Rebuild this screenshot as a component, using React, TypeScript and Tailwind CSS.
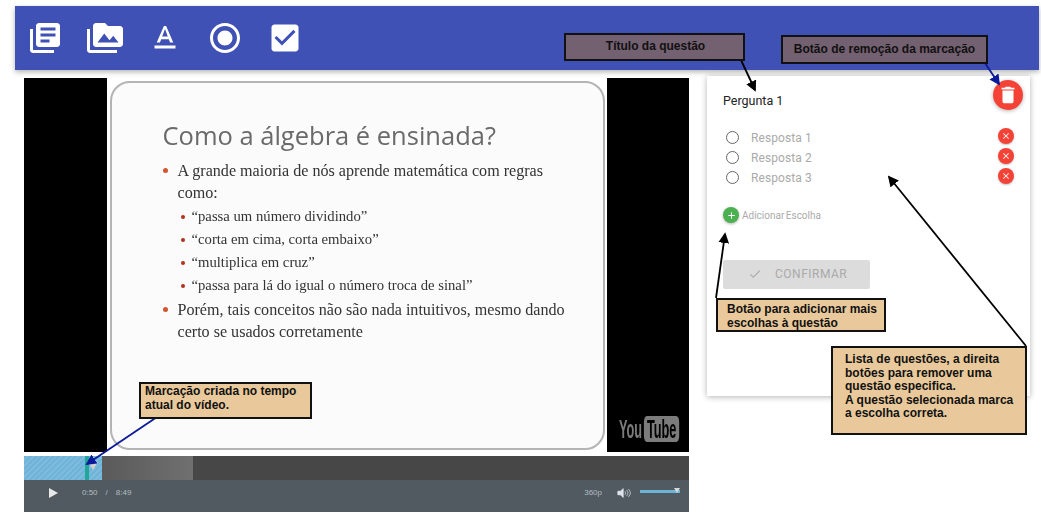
const toolbarIcons = [
  "M4 6H2v14c0 1.1.9 2 2 2h14v-2H4V6zm16-4H8c-1.1 0-2 .9-2 2v12c0 1.1.9 2 2 2h12c1.1 0 2-.9 2-2V4c0-1.1-.9-2-2-2zm-1 9H9V9h10v2zm-4 4H9v-2h6v2zm4-8H9V5h10v2z",
  "M2 6H0v5h.01L0 20c0 1.1.9 2 2 2h18v-2H2V6zm20-2h-8l-2-2H6c-1.1 0-1.99.9-1.99 2L4 16c0 1.1.9 2 2 2h16c1.1 0 2-.9 2-2V6c0-1.1-.9-2-2-2zM7 15l4.5-6 3.5 4.51 2.5-3.01L21 15H7z",
  "M5 17v2h14v-2H5zm4.5-4.2h5l.9 2.2h2.1L12.75 4h-1.5L6.5 15h2.1l.9-2.2zM12 5.98L13.87 11h-3.74L12 5.98z",
  "M12 7c-2.76 0-5 2.24-5 5s2.24 5 5 5 5-2.24 5-5-2.24-5-5-5zm0-5C6.48 2 2 6.48 2 12s4.48 10 10 10 10-4.48 10-10S17.52 2 12 2zm0 18c-4.42 0-8-3.58-8-8s3.58-8 8-8 8 3.58 8 8-3.58 8-8 8z",
  "M19 3H5c-1.11 0-2 .9-2 2v14c0 1.1.89 2 2 2h14c1.11 0 2-.9 2-2V5c0-1.1-.89-2-2-2zm-9 14l-5-5 1.41-1.41L10 14.17l7.59-7.59L19 8l-9 9z",
];

const subItems = [
  "“passa um número dividindo”",
  "“corta em cima, corta embaixo”",
  "“multiplica em cruz”",
  "“passa para lá do igual o número troca de sinal”",
];

function Toolbar() {
  return (
    <div className="ml-[15px] mt-[6px] flex h-[64px] w-[1024px] items-start gap-[24px] bg-[#3f51b5] pl-[12px] pt-[14px] shadow-[0_2px_5px_rgba(0,0,0,0.3)]">
      {toolbarIcons.map((d) => (
        <svg key={d} viewBox="0 0 24 24" className="h-[36px] w-[36px] fill-white">
          <path d={d} />
        </svg>
      ))}
    </div>
  );
}

function Slide() {
  return (
    <div className="flex h-[374px] w-[665px] justify-center bg-black">
      <div className="h-full w-[500px] bg-white pl-[3px] pt-[3px]">
        <div className="h-[369px] w-[495px] rounded-[20px] border-2 border-[#b4b4b4] bg-[#fbfbfb] pl-[51px] pr-[29px] pt-[34px] font-['Liberation_Serif',serif] text-[16.100px] text-[#333] blur-[0.4px]">
          <h1 className="font-['Open_Sans',sans-serif] text-[25.500px] leading-[36px] text-[#6a6a6a]">
            Como a álgebra é ensinada?
          </h1>
          <div className="mt-[7px] flex gap-[10px]">
            <span className="mt-[8px] h-[5px] w-[5px] shrink-0 rounded-full bg-[#d0562c]" />
            <p className="leading-[22px]">A grande maioria de nós aprende matemática com regras como:</p>
          </div>
          <ul className="ml-[18px] mt-px">
            {subItems.map((item) => (
              <li key={item} className="flex h-[23px] items-center gap-[7px] text-[14.700px]">
                <span className="h-[4px] w-[4px] shrink-0 rounded-full bg-[#b03020]" />
                {item}
              </li>
            ))}
          </ul>
          <div className="mt-[2px] flex gap-[10px]">
            <span className="mt-[8px] h-[5px] w-[5px] shrink-0 rounded-full bg-[#d0562c]" />
            <p className="leading-[21.500px]">Porém, tais conceitos não são nada intuitivos, mesmo dando certo se usados corretamente</p>
          </div>
        </div>
      </div>
    </div>
  );
}

function Player() {
  return (
    <div className="w-[665px]">
      <div className="mt-[4px] flex h-[24px] bg-[#474747]">
        <div className="relative h-full w-[78px] bg-[repeating-linear-gradient(135deg,#6fb3d8_0,#6fb3d8_2px,#7dbcdc_2px,#7dbcdc_4px)]">
          <div className="absolute left-[61px] top-0 h-full w-[4px] bg-[#1fa79a]" />
          <div className="absolute left-[64px] top-[6px] h-0 w-0 border-x-[5px] border-t-[8px] border-x-transparent border-t-[#d0d0d0]" />
        </div>
        <div className="h-full w-[91px] bg-gradient-to-r from-[#5a5a5a] to-[#707070]" />
      </div>
      <div className="flex h-[32px] items-center bg-[#505a60] pb-[6px] font-['Liberation_Sans',sans-serif] text-[8px] text-[#b4bcc0]">
        <div className="ml-[25px] h-0 w-0 border-y-[5px] border-l-[9px] border-y-transparent border-l-[#e8e8e8]" />
        <span className="ml-[24px]">0:50</span>
        <span className="ml-[8px]">/</span>
        <span className="ml-[8px]">8:49</span>
        <span className="ml-auto">360p</span>
        <svg viewBox="0 0 16 12" className="ml-[15px] h-[12px] w-[14px] fill-none stroke-[#dfe6ea]">
          <path d="M1 4h3l3-3v10L4 8H1z" fill="#dfe6ea" />
          <path d="M9 4c1 1 1 3 0 4M11 2.500c2 2 2 5 0 7M13 1.500c3 3 3 6 0 9" strokeWidth="0.8" />
        </svg>
        <div className="relative mb-[3px] ml-[9px] mr-[9px] h-[3px] w-[40px] bg-[#6fb3d8]">
          <div className="absolute -top-[2px] right-0 h-0 w-0 border-x-[3px] border-t-[5px] border-x-transparent border-t-[#d8d8d8]" />
        </div>
      </div>
    </div>
  );
}

function QuestionCard() {
  return (
    <div className="ml-[18px] mt-[6px] h-[320px] w-[323px] bg-white pl-[16px] pr-[14px] pt-[4px] font-['Roboto',sans-serif] shadow-[0_1px_6px_rgba(0,0,0,0.3)]">
      <div className="flex h-[30px] items-center justify-between">
        <span className="mt-[13px] text-[12.500px] text-[#222]">Pergunta 1</span>
        <button className="-mr-[7px] mt-[-1px] flex h-[30px] w-[30px] items-center justify-center rounded-full bg-[#f44336] shadow-[0_1px_4px_rgba(0,0,0,0.3)]">
          <svg viewBox="0 0 24 24" className="h-[22px] w-[22px] fill-white">
            <path d="M6 19c0 1.100.9 2 2 2h8c1.100 0 2-.9 2-2V7H6v12zM19 4h-3.500l-1-1h-5l-1 1H5v2h14V4z" />
          </svg>
        </button>
      </div>
      <div className="mt-[17px]">
        {["Resposta 1", "Resposta 2", "Resposta 3"].map((label) => (
          <div key={label} className="flex h-[20px] items-center">
            <span className="ml-[3px] h-[13px] w-[13px] rounded-full border border-[#666]" />
            <span className="ml-[12px] mt-[1px] text-[12px] tracking-[0.1px] text-[#aaa]">{label}</span>
            <button className="-mt-[2px] ml-auto mr-[2px] flex h-[16px] w-[16px] items-center justify-center rounded-full bg-[#f44336] shadow-[0_1px_2px_rgba(0,0,0,0.25)]">
              <svg viewBox="0 0 24 24" className="h-[10px] w-[10px] fill-white">
                <path d="M19 6.410L17.590 5 12 10.590 6.410 5 5 6.410 10.590 12 5 17.590 6.410 19 12 13.410 17.590 19 19 17.590 13.410 12z" />
              </svg>
            </button>
          </div>
        ))}
      </div>
      <div className="mt-[20px] flex items-center gap-[3px]">
        <span className="flex h-[16px] w-[16px] items-center justify-center rounded-full bg-[#4caf50] shadow-[0_1px_3px_rgba(0,0,0,0.3)]">
          <svg viewBox="0 0 24 24" className="h-[11px] w-[11px] fill-white">
            <path d="M19 13h-6v6h-2v-6H5v-2h6V5h2v6h6v2z" />
          </svg>
        </span>
        <span className="text-[10px] text-[#aaa] [word-spacing:-1px]">Adicionar Escolha</span>
      </div>
      <button className="mt-[37px] flex h-[29px] w-[147px] items-center rounded-[2px] bg-[#dcdcdc] pb-[2px] pl-[25px]">
        <svg viewBox="0 0 24 24" className="h-[14px] w-[14px] fill-[#aaa]">
          <path d="M9 16.170L4.830 12l-1.420 1.410L9 19 21 7l-1.410-1.410z" />
        </svg>
        <span className="ml-[13px] text-[12px] tracking-[0.5px] text-[#aaa]">CONFIRMAR</span>
      </button>
    </div>
  );
}

function Arrows() {
  return (
    <svg className="absolute left-0 top-0 h-[513px] w-[1041px]" viewBox="0 0 1041 513">
      <defs>
        <marker id="head-black" markerWidth="6" markerHeight="6" refX="5" refY="3" orient="auto">
          <path d="M0 0L6 3L0 6z" fill="#000" />
        </marker>
        <marker id="head-blue" markerWidth="6" markerHeight="6" refX="5" refY="3" orient="auto">
          <path d="M0 0L6 3L0 6z" fill="#0a1a9a" />
        </marker>
      </defs>
      <g fill="none" strokeWidth="1.800">
        <path d="M741 60L755 90" stroke="#000" markerEnd="url(#head-black)" />
        <path d="M985 63L999 84" stroke="#0a1a9a" markerEnd="url(#head-blue)" />
        <path d="M716 298L725 234" stroke="#000" markerEnd="url(#head-black)" />
        <path d="M1026 346L889 177" stroke="#000" markerEnd="url(#head-black)" />
        <path d="M157 417L87 464" stroke="#0a1a9a" markerEnd="url(#head-blue)" />
      </g>
    </svg>
  );
}

function Note({ className, children }: { className: string; children: React.ReactNode }) {
  return (
    <div className={`absolute border-2 border-[#111] font-['Liberation_Sans',sans-serif] text-[12px] font-bold leading-[13.500px] text-[#111] ${className}`}>
      {children}
    </div>
  );
}

export default function App() {
  return (
    <div className="relative h-[513px] w-[1041px] overflow-hidden bg-white">
      <Toolbar />
      <div className="flex pl-[24px]">
        <div className="mt-[8px]">
          <div className="relative">
            <Slide />
            <div className="absolute bottom-[10px] right-[10px] flex origin-right scale-x-[0.49] items-center gap-[4px] font-['Liberation_Sans',sans-serif] text-[26px] font-bold leading-[26px] text-[#7c7c7c]">
              You
              <span className="rounded-[6px] bg-[#7c7c7c] px-[6px] text-black">Tube</span>
            </div>
          </div>
          <Player />
        </div>
        <QuestionCard />
      </div>
      <Arrows />
      <Note className="left-[564px] top-[33px] flex h-[28px] w-[181px] justify-center bg-[#736070] pl-[2px] pt-[5px]">Título da questão</Note>
      <Note className="left-[781px] top-[35px] flex h-[29px] w-[207px] justify-center bg-[#736070] pt-[6px]">Botão de remoção da marcação</Note>
      <Note className="left-[716px] top-[298px] h-[34px] w-[170px] bg-[#e9c99b] pl-[9px] pt-[3px]">
        Botão para adicionar mais<br />escolhas à questão
      </Note>
      <Note className="left-[831px] top-[346px] h-[89px] w-[196px] bg-[#e9c99b] pl-[12px] pt-[5px]">
        Lista de questões, a direita<br />botões para remover uma<br />questão especifica.<br />A questão selecionada marca<br />a escolha correta.
      </Note>
      <Note className="left-[139px] top-[382px] h-[37px] w-[173px] bg-[#e9c99b] pl-[4px] pt-[1px]">
        Marcação criada no tempo<br />atual do vídeo.
      </Note>
    </div>
  );
}
